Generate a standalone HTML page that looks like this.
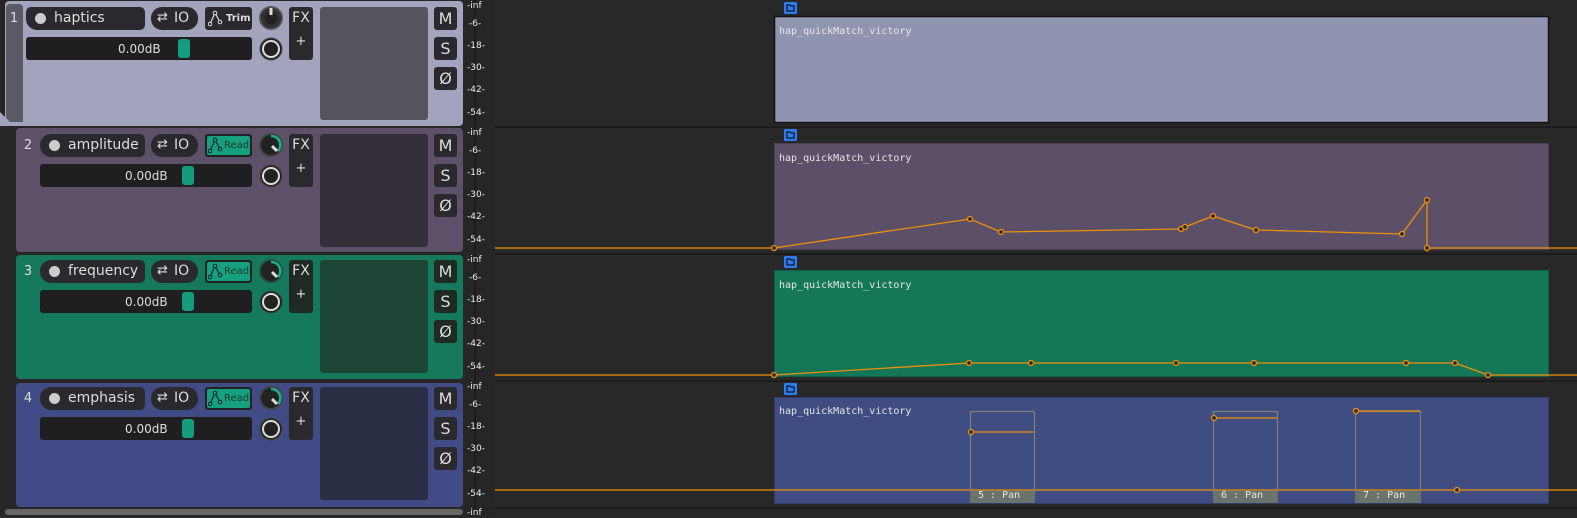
<!DOCTYPE html>
<html><head><meta charset="utf-8"><style>
*{margin:0;padding:0;box-sizing:border-box}
body{width:1577px;height:514px;background:#282828;position:relative;overflow:hidden;font-family:"DejaVu Sans","Liberation Sans",sans-serif}
.a{position:absolute}
.panel{position:absolute;left:16px;width:447px;height:124px;border-radius:4px}
.num{position:absolute;font-size:13px;color:#ddd;width:12px;text-align:center}
.pill{position:absolute;background:#2a2a2e;border-radius:11px;height:23px;color:#ddd;font-size:13px}
.dot{position:absolute;left:9px;top:6px;width:11px;height:11px;border-radius:50%;background:#ccc}
.btn{position:absolute;background:#2a2a2e;border-radius:3px;color:#ddd;text-align:center}
.fader{position:absolute;background:#1f1f22;border-radius:3px;height:23px;color:#ddd;font-size:12px}
.hdl{position:absolute;top:2px;width:12px;height:19px;border-radius:3px;background:#159c7d}
.box{position:absolute;left:320px;width:108px;height:113px;border-radius:3px}
.ms{position:absolute;left:434px;width:23px;height:23px;background:#2a2a2e;border-radius:3px;color:#ddd;font-size:16px;text-align:center;line-height:23px}
.meter{position:absolute;left:463px;width:32px;font-size:9px;color:#eee}
.meter span{position:absolute;left:4px}
.lbl{position:absolute;font-family:"DejaVu Sans Mono","Liberation Mono",monospace;font-size:10px;color:#e6e6e6}
.rd{position:absolute;left:19px;top:6px;font-size:10px;color:#1a3a30;line-height:12px}
</style></head><body>
<div class="a" style="left:0;top:0;width:495px;height:514px;background:#262626"></div>
<div class="a" style="left:474px;top:0;width:2px;height:514px;background:#1c1c1c"></div>

<!-- TRACK 1 -->
<div class="panel" style="left:5px;top:1px;width:458px;height:125px;background:#a3a3be"></div>
<div class="a" style="left:6px;top:4px;width:17px;height:118px;background:#5b5b66;border-radius:4px 4px 0 0"></div>
<div class="a" style="left:0;top:112px;width:0;height:0;border-left:14px solid #a3a3be;border-top:14px solid transparent"></div>
<div class="num" style="left:8px;top:11px">1</div>
<div class="pill" style="left:26px;top:7px;width:119px;border-radius:5px 5px 5px 11px"><div class="dot"></div><span class="a" style="left:28px;top:3px;font-size:14px">haptics</span></div>
<div class="pill" style="left:151px;top:7px;width:47px"><span class="a" style="left:6px;top:3px;font-size:13px">⇄</span><span class="a" style="left:23px;top:3px;font-size:14px">IO</span></div>
<div class="btn" style="left:205px;top:7px;width:47px;height:23px"><svg class="a" style="left:3px;top:3px" width="16" height="17"><path d="M2 14 L7 3 L12 12" stroke="#ddd" fill="none" stroke-width="1.2"/><circle cx="2" cy="14" r="1.8" fill="#2a2a2e" stroke="#ddd"/><circle cx="7" cy="3" r="1.8" fill="#2a2a2e" stroke="#ddd"/><circle cx="12" cy="12" r="1.8" fill="#2a2a2e" stroke="#ddd"/></svg><span class="a" style="left:21px;top:6px;font-size:10px;font-weight:bold;line-height:12px">Trim</span></div>
<svg class="a" style="left:258px;top:5px" width="26" height="58"><circle cx="13" cy="13" r="11" fill="#222" stroke="#555" stroke-width="2"/><circle cx="13" cy="13" r="8" fill="none" stroke="#333" stroke-width="3"/><line x1="13" y1="3" x2="13" y2="10" stroke="#ddd" stroke-width="3"/><circle cx="13" cy="44" r="11" fill="#222" stroke="#444"/><circle cx="13" cy="44" r="8" fill="none" stroke="#ddd" stroke-width="2"/></svg>
<div class="btn" style="left:289px;top:7px;width:24px;height:53px"><div style="font-size:14px;margin-top:3px">FX</div><div style="font-size:13px;margin-top:8px">+</div></div>
<div class="fader" style="left:26px;top:37px;width:226px"><span class="a" style="left:92px;top:5px">0.00dB</span><div class="hdl" style="left:152px"></div></div>
<div class="box" style="top:7px;background:#54545e"></div>
<div class="ms" style="top:7px">M</div><div class="ms" style="top:37px">S</div><div class="ms" style="top:67px">Ø</div>

<!-- TRACK 2 -->
<div class="panel" style="top:128px;background:#5d5069"></div>
<div class="num" style="left:22px;top:138px">2</div>
<div class="pill" style="left:40px;top:134px;width:105px;border-radius:11px 5px 5px 11px"><div class="dot"></div><span class="a" style="left:28px;top:3px;font-size:14px">amplitude</span></div>
<div class="pill" style="left:151px;top:134px;width:47px"><span class="a" style="left:6px;top:3px">⇄</span><span class="a" style="left:23px;top:3px;font-size:14px">IO</span></div>
<div class="btn" style="left:205px;top:134px;width:47px;height:23px;background:#222;"><div class="a" style="left:2px;top:2px;width:43px;height:19px;background:#17a07e;border-radius:2px"></div><svg class="a" style="left:3px;top:3px" width="16" height="17"><path d="M2 14 L7 3 L12 12" stroke="#123" fill="none" stroke-width="1.2"/><circle cx="2" cy="14" r="1.8" fill="#17a07e" stroke="#123"/><circle cx="7" cy="3" r="1.8" fill="#17a07e" stroke="#123"/><circle cx="12" cy="12" r="1.8" fill="#17a07e" stroke="#123"/></svg><span class="rd">Read</span></div>
<svg class="a" style="left:258px;top:132px" width="26" height="58"><circle cx="13" cy="13" r="11" fill="#222" stroke="#444" stroke-width="2"/><path d="M13 4 A9 9 0 0 1 20 19" stroke="#17b08a" stroke-width="2.5" fill="none"/><line x1="14" y1="14" x2="19" y2="19" stroke="#ddd" stroke-width="3"/><circle cx="13" cy="44" r="11" fill="#222" stroke="#444"/><circle cx="13" cy="44" r="8" fill="none" stroke="#ddd" stroke-width="2"/></svg>
<div class="btn" style="left:289px;top:134px;width:24px;height:53px"><div style="font-size:14px;margin-top:3px">FX</div><div style="font-size:13px;margin-top:8px">+</div></div>
<div class="fader" style="left:40px;top:164px;width:212px"><span class="a" style="left:85px;top:5px">0.00dB</span><div class="hdl" style="left:142px"></div></div>
<div class="box" style="top:134px;background:#352f3b"></div>
<div class="ms" style="top:134px">M</div><div class="ms" style="top:164px">S</div><div class="ms" style="top:194px">Ø</div>

<!-- TRACK 3 -->
<div class="panel" style="top:255px;background:#157a5b"></div>
<div class="num" style="left:22px;top:264px">3</div>
<div class="pill" style="left:40px;top:260px;width:105px;border-radius:11px 5px 5px 11px"><div class="dot"></div><span class="a" style="left:28px;top:3px;font-size:14px">frequency</span></div>
<div class="pill" style="left:151px;top:260px;width:47px"><span class="a" style="left:6px;top:3px">⇄</span><span class="a" style="left:23px;top:3px;font-size:14px">IO</span></div>
<div class="btn" style="left:205px;top:260px;width:47px;height:23px;background:#222;"><div class="a" style="left:2px;top:2px;width:43px;height:19px;background:#17a07e;border-radius:2px"></div><svg class="a" style="left:3px;top:3px" width="16" height="17"><path d="M2 14 L7 3 L12 12" stroke="#123" fill="none" stroke-width="1.2"/><circle cx="2" cy="14" r="1.8" fill="#17a07e" stroke="#123"/><circle cx="7" cy="3" r="1.8" fill="#17a07e" stroke="#123"/><circle cx="12" cy="12" r="1.8" fill="#17a07e" stroke="#123"/></svg><span class="rd">Read</span></div>
<svg class="a" style="left:258px;top:258px" width="26" height="58"><circle cx="13" cy="13" r="11" fill="#222" stroke="#2a4a40" stroke-width="2"/><path d="M13 4 A9 9 0 0 1 20 19" stroke="#17b08a" stroke-width="2.5" fill="none"/><line x1="14" y1="14" x2="19" y2="19" stroke="#ddd" stroke-width="3"/><circle cx="13" cy="44" r="11" fill="#222" stroke="#2a4a40"/><circle cx="13" cy="44" r="8" fill="none" stroke="#ddd" stroke-width="2"/></svg>
<div class="btn" style="left:289px;top:260px;width:24px;height:53px;background:#1f2a27"><div style="font-size:14px;margin-top:3px">FX</div><div style="font-size:13px;margin-top:8px">+</div></div>
<div class="fader" style="left:40px;top:290px;width:212px"><span class="a" style="left:85px;top:5px">0.00dB</span><div class="hdl" style="left:142px"></div></div>
<div class="box" style="top:260px;background:#1c4437"></div>
<div class="ms" style="top:260px;background:#1f2a27">M</div><div class="ms" style="top:290px;background:#1f2a27">S</div><div class="ms" style="top:320px;background:#1f2a27">Ø</div>

<!-- TRACK 4 -->
<div class="panel" style="top:383px;background:#414b85"></div>
<div class="num" style="left:22px;top:391px">4</div>
<div class="pill" style="left:40px;top:387px;width:105px;border-radius:11px 5px 5px 11px"><div class="dot"></div><span class="a" style="left:28px;top:3px;font-size:14px">emphasis</span></div>
<div class="pill" style="left:151px;top:387px;width:47px"><span class="a" style="left:6px;top:3px">⇄</span><span class="a" style="left:23px;top:3px;font-size:14px">IO</span></div>
<div class="btn" style="left:205px;top:387px;width:47px;height:23px;background:#222;"><div class="a" style="left:2px;top:2px;width:43px;height:19px;background:#17a07e;border-radius:2px"></div><svg class="a" style="left:3px;top:3px" width="16" height="17"><path d="M2 14 L7 3 L12 12" stroke="#123" fill="none" stroke-width="1.2"/><circle cx="2" cy="14" r="1.8" fill="#17a07e" stroke="#123"/><circle cx="7" cy="3" r="1.8" fill="#17a07e" stroke="#123"/><circle cx="12" cy="12" r="1.8" fill="#17a07e" stroke="#123"/></svg><span class="rd">Read</span></div>
<svg class="a" style="left:258px;top:385px" width="26" height="58"><circle cx="13" cy="13" r="11" fill="#222" stroke="#444" stroke-width="2"/><path d="M13 4 A9 9 0 0 1 20 19" stroke="#17b08a" stroke-width="2.5" fill="none"/><line x1="14" y1="14" x2="19" y2="19" stroke="#ddd" stroke-width="3"/><circle cx="13" cy="44" r="11" fill="#222" stroke="#444"/><circle cx="13" cy="44" r="8" fill="none" stroke="#ddd" stroke-width="2"/></svg>
<div class="btn" style="left:289px;top:387px;width:24px;height:53px"><div style="font-size:14px;margin-top:3px">FX</div><div style="font-size:13px;margin-top:8px">+</div></div>
<div class="fader" style="left:40px;top:417px;width:212px"><span class="a" style="left:85px;top:5px">0.00dB</span><div class="hdl" style="left:142px"></div></div>
<div class="box" style="top:387px;background:#2b2f45"></div>
<div class="ms" style="top:387px">M</div><div class="ms" style="top:417px">S</div><div class="ms" style="top:447px">Ø</div>
<div class="a" style="left:5px;top:509px;width:458px;height:6px;background:#666;border-radius:3px"></div>

<!-- meters -->
<div class="meter" style="top:0"><span style="top:1px">-inf</span><span style="top:19px;left:6px">-6-</span><span style="top:41px">-18-</span><span style="top:63px">-30-</span><span style="top:85px">-42-</span><span style="top:108px">-54-</span></div>
<div class="meter" style="top:127px"><span style="top:1px">-inf</span><span style="top:19px;left:6px">-6-</span><span style="top:41px">-18-</span><span style="top:63px">-30-</span><span style="top:85px">-42-</span><span style="top:108px">-54-</span></div>
<div class="meter" style="top:254px"><span style="top:1px">-inf</span><span style="top:19px;left:6px">-6-</span><span style="top:41px">-18-</span><span style="top:63px">-30-</span><span style="top:85px">-42-</span><span style="top:108px">-54-</span></div>
<div class="meter" style="top:381px"><span style="top:1px">-inf</span><span style="top:19px;left:6px">-6-</span><span style="top:41px">-18-</span><span style="top:63px">-30-</span><span style="top:85px">-42-</span><span style="top:108px">-54-</span></div>
<div class="meter" style="top:508px"><span style="top:0">-inf</span></div>

<!-- arrange -->
<svg class="a" style="left:0;top:0" width="1577" height="514">
<g stroke="#1c1c1c" stroke-width="2"><line x1="495" y1="127" x2="1577" y2="127"/><line x1="495" y1="254" x2="1577" y2="254"/><line x1="495" y1="381" x2="1577" y2="381"/><line x1="495" y1="508" x2="1577" y2="508"/></g>
<rect x="774.5" y="16.5" width="774" height="106" fill="#9194b1" stroke="#111" stroke-width="1.5"/>
<rect x="774.5" y="143.5" width="774" height="106" fill="#5c4f68" stroke="#4a3f55"/>
<rect x="774.5" y="270.5" width="774" height="106" fill="#147858" stroke="#106048"/>
<rect x="774.5" y="397.5" width="774" height="106" fill="#404d82" stroke="#333d6a"/>
<g fill="#2f7cf0"><rect x="784" y="2" width="13" height="12" rx="1.5"/><rect x="784" y="129" width="13" height="12" rx="1.5"/><rect x="784" y="256" width="13" height="12" rx="1.5"/><rect x="784" y="383" width="13" height="12" rx="1.5"/></g>
<g fill="none" stroke="#112" stroke-width="1.2"><path d="M787 5h3l1 1h3v5h-7z"/><path d="M787 132h3l1 1h3v5h-7z"/><path d="M787 259h3l1 1h3v5h-7z"/><path d="M787 386h3l1 1h3v5h-7z"/></g>
<g fill="none" stroke="#f0900a" stroke-width="1.3"><polyline points="495,248 774,248 970,219 1001,232 1181,229 1185,227 1213,216 1256,230 1402,234 1427,200 1427,248 1577,248"/>
<polyline points="495,375 774,375 970,363 1031,363 1176,363 1254,363 1406,363 1455,363 1488,375 1577,375"/>
<line x1="495" y1="490" x2="1577" y2="490"/></g>
<g fill="none" stroke="#7b7f78" stroke-width="1.3"><rect x="970.5" y="411.5" width="64" height="80"/><rect x="1213.5" y="411.5" width="64" height="80"/><rect x="1355.5" y="411.5" width="65" height="80"/></g>
<g stroke="#f0900a" stroke-width="1.3"><line x1="971" y1="432" x2="1034" y2="432"/><line x1="1214" y1="418" x2="1277" y2="418"/><line x1="1356" y1="411" x2="1420" y2="411"/></g>
<g fill="#6b736d"><rect x="970" y="491" width="65" height="12"/><rect x="1213" y="491" width="65" height="12"/><rect x="1355" y="491" width="66" height="12"/></g>
<g fill="#2a2a2a" stroke="#f0900a" stroke-width="1.3">
<circle cx="774" cy="248" r="2.5"/><circle cx="970" cy="219" r="2.5"/><circle cx="1001" cy="232" r="2.5"/><circle cx="1181" cy="229" r="2.5"/><circle cx="1185" cy="227" r="2.5"/><circle cx="1213" cy="216" r="2.5"/><circle cx="1256" cy="230" r="2.5"/><circle cx="1402" cy="234" r="2.5"/><circle cx="1427" cy="200" r="2.5"/><circle cx="1427" cy="248" r="2.5"/>
<circle cx="774" cy="375" r="2.5"/><circle cx="969" cy="363" r="2.5"/><circle cx="1031" cy="363" r="2.5"/><circle cx="1176" cy="363" r="2.5"/><circle cx="1254" cy="363" r="2.5"/><circle cx="1406" cy="363" r="2.5"/><circle cx="1455" cy="363" r="2.5"/><circle cx="1488" cy="375" r="2.5"/>
<circle cx="1457" cy="490" r="2.5"/><circle cx="971" cy="432" r="2.5"/><circle cx="1214" cy="418" r="2.5"/><circle cx="1356" cy="411" r="2.5"/></g>
</svg>
<div class="lbl" style="left:779px;top:26px">hap_quickMatch_victory</div>
<div class="lbl" style="left:779px;top:153px">hap_quickMatch_victory</div>
<div class="lbl" style="left:779px;top:280px">hap_quickMatch_victory</div>
<div class="lbl" style="left:779px;top:406px">hap_quickMatch_victory</div>
<div class="lbl" style="left:978px;top:490px">5 : Pan</div>
<div class="lbl" style="left:1221px;top:490px">6 : Pan</div>
<div class="lbl" style="left:1363px;top:490px">7 : Pan</div>
</body></html>
